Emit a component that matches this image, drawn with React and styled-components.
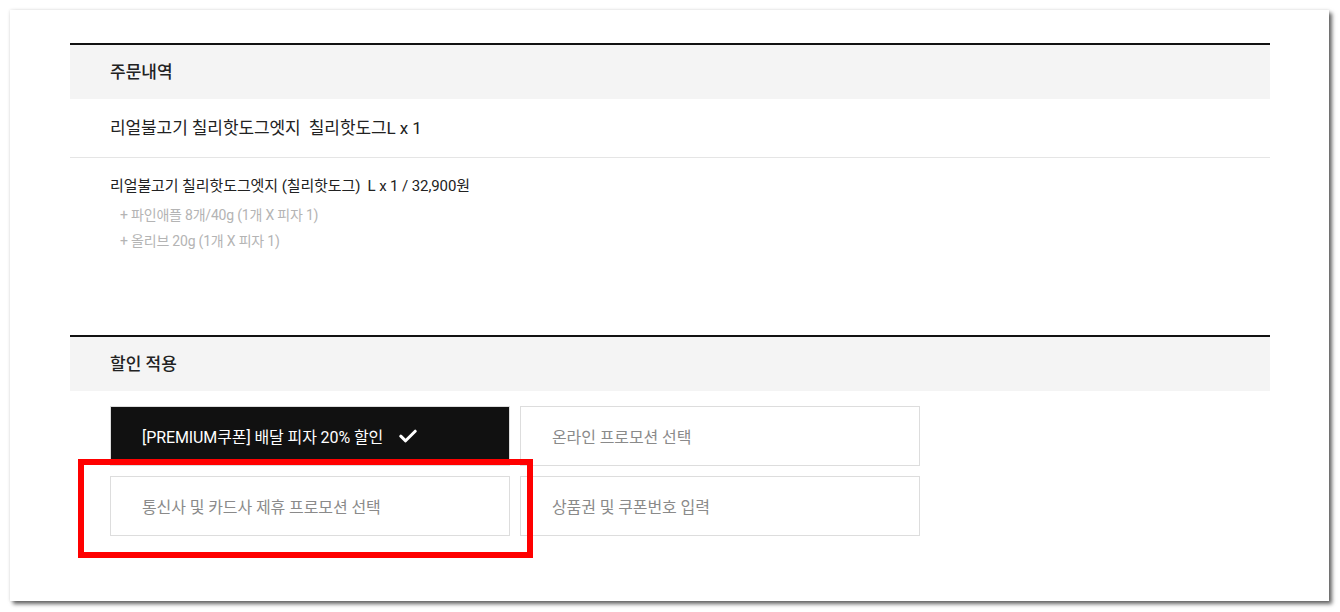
import React from "react";
import styled, { createGlobalStyle } from "styled-components";

const Global = createGlobalStyle`
  html, body { margin: 0; padding: 0; background: #ffffff; }
  body { font-family: Roboto, "Noto Sans CJK KR", sans-serif; color: #222; }
  * { box-sizing: border-box; }
`;

const Page = styled.div`
  width: 1340px;
  height: 612px;
  padding: 10px 11px 11px 10px;
  position: relative;
`;

const Card = styled.div`
  height: 591px;
  background: #fff;
  box-shadow: 3px 3px 4px rgba(0, 0, 0, 0.6), 0 0 3px rgba(0, 0, 0, 0.12);
  padding: 33px 59px 0 60px;
`;

const Section = styled.section`
  border-top: 2px solid #111;
`;

const SectionHead = styled.div`
  height: 54px;
  background: #f4f4f4;
  display: flex;
  align-items: center;
  padding: 0 0 3px 40px;
  font-size: 17px;
  font-weight: 500;
  color: #222;
`;

const ItemRow = styled.div`
  height: 59px;
  display: flex;
  align-items: center;
  padding: 0 0 3px 40px;
  font-size: 17px;
  letter-spacing: -0.1px;
  color: #222;
  border-bottom: 1px solid #e5e5e5;
  white-space: pre;
`;

const Detail = styled.div`
  padding: 18px 0 0 40px;
  height: 177px;
`;

const DetailMain = styled.div`
  font-size: 15px;
  letter-spacing: -0.1px;
  line-height: 20px;
  color: #222;
  white-space: pre;
  margin-bottom: 6px;
`;

const Option = styled.div`
  font-size: 14px;
  letter-spacing: -0.2px;
  line-height: 26px;
  color: #b4b4b4;
  padding-left: 10px;
`;

const Grid = styled.div`
  display: grid;
  grid-template-columns: 400px 400px;
  grid-auto-rows: 60px;
  gap: 10px;
  padding: 15px 0 0 40px;
`;

const Choice = styled.button`
  display: flex;
  align-items: center;
  gap: 16px;
  padding: 0 0 0 31px;
  border: 1px solid #dddddd;
  background: ${(p) => (p.$active ? "#111" : "#fff")};
  color: ${(p) => (p.$active ? "#fff" : "#8a8a8a")};
  font-family: Roboto, "Noto Sans CJK KR", sans-serif;
  font-size: 16px;
  letter-spacing: -0.1px;
  text-align: left;
  cursor: pointer;
`;

const Highlight = styled.div`
  position: absolute;
  left: 78px;
  top: 459px;
  width: 455px;
  height: 99px;
  border: 6px solid #ff0000;
  pointer-events: none;
`;

const Check = () => (
  <svg width="18" height="14" viewBox="0 0 18 14" aria-hidden="true">
    <path d="M1.8 7.2 L6.6 11.8 L16.2 2.2" fill="none" stroke="#fff" strokeWidth="3" strokeLinecap="round" strokeLinejoin="round" />
  </svg>
);

export default function App() {
  return (
    <>
      <Global />
      <Page>
        <Card>
          <Section>
            <SectionHead>주문내역</SectionHead>
            <ItemRow>{"리얼불고기 칠리핫도그엣지  칠리핫도그L x 1"}</ItemRow>
            <Detail>
              <DetailMain>{"리얼불고기 칠리핫도그엣지 (칠리핫도그)  L x 1 / 32,900원"}</DetailMain>
              <Option>+ 파인애플 8개/40g (1개 X 피자 1)</Option>
              <Option>+ 올리브 20g (1개 X 피자 1)</Option>
            </Detail>
          </Section>
          <Section>
            <SectionHead>할인 적용</SectionHead>
            <Grid>
              <Choice $active>
                [PREMIUM쿠폰] 배달 피자 20% 할인 <Check />
              </Choice>
              <Choice>온라인 프로모션 선택</Choice>
              <Choice>통신사 및 카드사 제휴 프로모션 선택</Choice>
              <Choice>상품권 및 쿠폰번호 입력</Choice>
            </Grid>
          </Section>
        </Card>
        <Highlight />
      </Page>
    </>
  );
}
